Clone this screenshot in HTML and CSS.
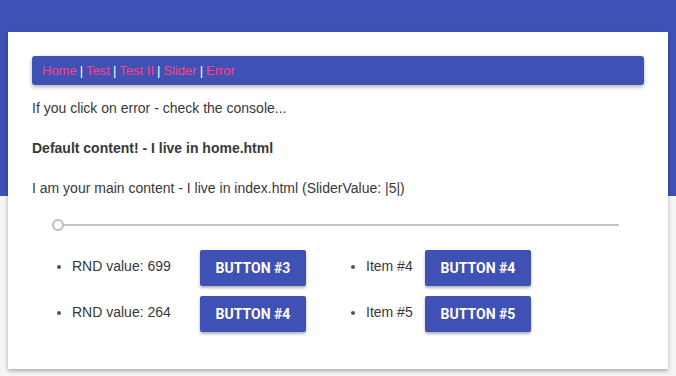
FILE: index.html
```html
<!DOCTYPE html>
<html>
<head>
<meta charset="utf-8">
<link rel="stylesheet" href="styles.css">
</head>
<body>
<div class="card">
  <nav class="nav">
    <a href="#">Home</a><span class="sep">|</span><a href="#">Test</a><span class="sep">|</span><a href="#">Test II</a><span class="sep">|</span><a href="#">Slider</a><span class="sep">|</span><a href="#">Error</a>
  </nav>
  <p class="first">If you click on error - check the console...</p>
  <p class="bold">Default content! - I live in home.html</p>
  <p>I am your main content - I live in index.html (SliderValue: |5|)</p>
  <div class="slider">
    <span class="thumb"></span>
    <span class="track"></span>
  </div>
  <div class="lists">
    <ul class="list list-a">
      <li><span class="label">RND value: 699</span><button class="btn">Button #3</button></li>
      <li><span class="label">RND value: 264</span><button class="btn">Button #4</button></li>
    </ul>
    <ul class="list list-b">
      <li><span class="label">Item #4</span><button class="btn">Button #4</button></li>
      <li><span class="label">Item #5</span><button class="btn">Button #5</button></li>
    </ul>
  </div>
</div>
</body>
</html>
```
FILE: styles.css
```css
html, body {
  margin: 0;
  padding: 0;
}
body {
  background: linear-gradient(#3f51b5 0, #3f51b5 196px, #f5f5f5 196px);
  min-height: 376px;
  font-family: "Liberation Sans", Arial, sans-serif;
  font-size: 14px;
  color: #383838;
}
.card {
  margin: 32px 8px 0;
  padding: 24px 24px 37px;
  background: #fff;
  box-shadow: 0 2px 4px rgba(0, 0, 0, 0.3);
}
.nav {
  height: 29px;
  box-sizing: border-box;
  padding: 0 10px;
  display: flex;
  align-items: center;
  background: #3f51b5;
  border-radius: 3px;
  box-shadow: 0 2px 4px rgba(0, 0, 0, 0.3);
  font-size: 13px;
}
.nav a {
  color: #ff4081;
  text-decoration: none;
}
.nav .sep {
  color: #fff;
  margin: 0 3px;
}
p {
  margin: 20px 0 0;
  line-height: 20px;
}
p.first {
  margin-top: 13px;
}
p.bold {
  font-weight: bold;
}
.slider {
  margin: 21px 25px 0 20px;
  height: 12px;
  display: flex;
  align-items: center;
}
.thumb {
  width: 8px;
  height: 8px;
  border: 2px solid #bdbdbd;
  border-radius: 50%;
  flex: none;
}
.track {
  flex: 1;
  height: 2px;
  background: #c4c4c4;
}
.lists {
  margin-top: 19px;
  display: grid;
  grid-template-columns: 294px 1fr;
}
.list {
  margin: 0;
  padding-left: 40px;
  display: flex;
  flex-direction: column;
  gap: 10px;
}
.list li {
  height: 36px;
  line-height: 32px;
}
.list li::marker {
  color: #555;
}
.label {
  display: inline-block;
  vertical-align: top;
}
.list-a .label {
  width: 128px;
}
.list-b .label {
  width: 59px;
}
.btn {
  vertical-align: top;
  height: 36px;
  width: 106px;
  padding: 0;
  border: none;
  border-radius: 2px;
  background: #3f51b5;
  color: #fff;
  font-family: Roboto, "Liberation Sans", sans-serif;
  font-weight: bold;
  font-size: 14px;
  line-height: 36px;
  text-transform: uppercase;
  box-shadow: 0 2px 3px rgba(0, 0, 0, 0.3);
}
```
